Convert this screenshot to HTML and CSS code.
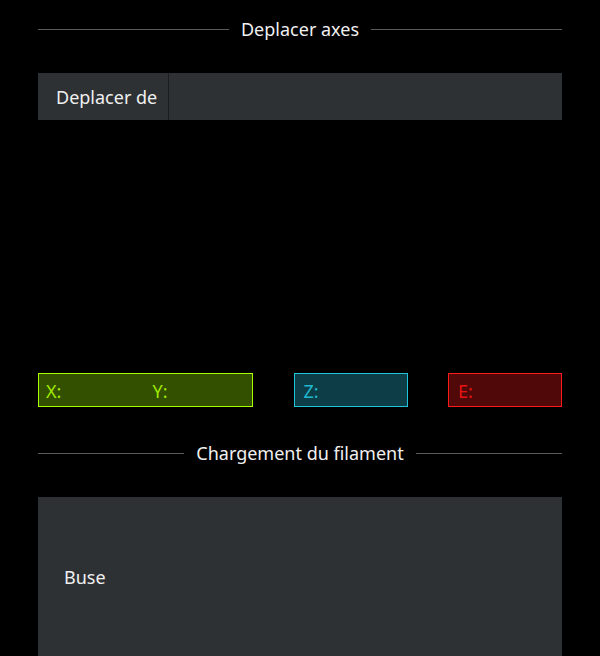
FILE: index.html
```html
<!DOCTYPE html>
<html lang="fr">
<head>
<meta charset="utf-8">
<link rel="stylesheet" href="styles.css">
</head>
<body>
<div class="page">
  <div class="section-title"><span class="line"></span><span class="title-text">Deplacer axes</span><span class="line"></span></div>
  <div class="move-bar">
    <div class="move-label">Deplacer de</div>
    <div class="move-value"></div>
  </div>
  <div class="axes-row">
    <div class="axis axis-xy">
      <div class="axis-cell">X:</div>
      <div class="axis-cell">Y:</div>
    </div>
    <div class="axis axis-z"><div class="axis-cell">Z:</div></div>
    <div class="axis axis-e"><div class="axis-cell">E:</div></div>
  </div>
  <div class="section-title second"><span class="line"></span><span class="title-text">Chargement du filament</span><span class="line"></span></div>
  <div class="panel">
    <div class="panel-label">Buse</div>
  </div>
</div>
</body>
</html>
```
FILE: styles.css
```css
html, body {
  margin: 0;
  padding: 0;
  background: #000;
  height: 100%;
  overflow: hidden;
}
body {
  font-family: "Noto Sans", "Open Sans", sans-serif;
  color: #f0f0f0;
  font-size: 18px;
}
.page {
  padding: 17px 38px 0 38px;
}
.section-title {
  display: flex;
  align-items: center;
  height: 24px;
  line-height: 24px;
}
.section-title .line {
  flex: 1;
  height: 1px;
  background: #5a5a5a;
}
.title-text {
  padding: 0 12px;
  white-space: nowrap;
}
.move-bar {
  margin-top: 32px;
  height: 47px;
  background: #2e3134;
  display: flex;
}
.move-label {
  display: flex;
  align-items: center;
  padding: 0 11px 0 18px;
  border-right: 1px solid #1b1d1f;
  white-space: nowrap;
}
.move-value {
  flex: 1;
}
.axes-row {
  margin-top: 253px;
  display: flex;
  justify-content: space-between;
  height: 34px;
}
.axis {
  box-sizing: border-box;
  border: 1px solid;
  display: flex;
}
.axis-cell {
  flex: 1;
  display: flex;
  align-items: center;
  padding-left: 7px;
  padding-top: 1px;
}
.axis-xy {
  width: 215px;
  border-color: #a8ff00;
  background: #335000;
  color: #a0e800;
}
.axis-z {
  width: 114px;
  border-color: #1fc3dc;
  background: #0d3e48;
  color: #1fb8d0;
}
.axis-z .axis-cell, .axis-e .axis-cell {
  padding-left: 9px;
}
.axis-e {
  width: 114px;
  border-color: #ff1a1a;
  background: #500808;
  color: #e81414;
}
.section-title.second {
  margin-top: 34px;
}
.panel {
  margin-top: 32px;
  height: 160px;
  background: #2e3134;
  display: flex;
  align-items: center;
  padding-left: 26px;
}
```
